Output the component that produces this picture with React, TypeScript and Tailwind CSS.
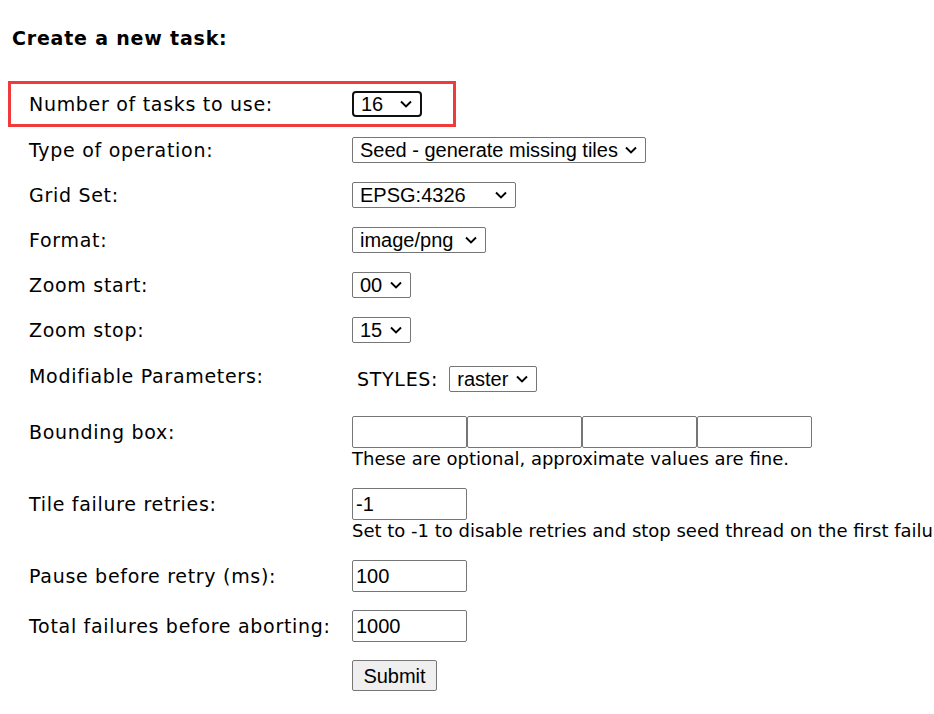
import React from "react";

function Chevron() {
  return (
    <svg width="12" height="8" viewBox="0 0 12 8" className="shrink-0">
      <path d="M1 1.5l5 5 5-5" fill="none" stroke="#000" strokeWidth="1.9" />
    </svg>
  );
}

function Select({ value, width, strong = false }: { value: string; width: string; strong?: boolean }) {
  return (
    <div
      className={`${width} h-[26px] flex items-center justify-between pl-[7px] pr-[8px] bg-white font-['Liberation_Sans',Arial,sans-serif] text-[20px] tracking-normal leading-none ${
        strong ? "border-2 border-[#101010] rounded-[4px]" : "border border-[#767676] rounded-[2px]"
      }`}
    >
      <span>{value}</span>
      <Chevron />
    </div>
  );
}

function TextBox({ value = "" }: { value?: string }) {
  return (
    <input
      readOnly
      value={value}
      className="w-[115px] h-[32px] border border-[#767676] rounded-[2px] px-[3px] font-['Liberation_Sans',Arial,sans-serif] text-[20px] tracking-normal text-black bg-white outline-none"
    />
  );
}

function Row({
  label,
  children,
  className = "",
  labelH = "h-[26px]",
}: {
  label: string;
  children: React.ReactNode;
  className?: string;
  labelH?: string;
}) {
  return (
    <div className={`flex items-start ${className}`}>
      <div className={`w-[323px] shrink-0 flex items-center ${labelH}`}>{label}</div>
      <div className="flex flex-col items-start">{children}</div>
    </div>
  );
}

export default function App() {
  return (
    <div className="w-[934px] h-[714px] overflow-hidden bg-white text-black font-['DejaVu_Sans',Verdana,sans-serif] text-[19px] tracking-[0.7px] leading-[22px]">
      <h3 className="pl-[12px] pt-[27px] font-bold text-[19px] tracking-[0.8px]">Create a new task:</h3>

      <div className="mt-[32px] ml-[8px] w-[448px] h-[46px] border-[3px] border-[#ef3b3b] flex items-center pl-[18px]">
        <div className="w-[323px] shrink-0">Number of tasks to use:</div>
        <Select value="16" width="w-[70px]" strong />
      </div>

      <div className="pl-[29px] flex flex-col">
        <Row label="Type of operation:" className="mt-[10px]">
          <Select value="Seed - generate missing tiles" width="w-[294px]" />
        </Row>
        <Row label="Grid Set:" className="mt-[19px]">
          <Select value="EPSG:4326" width="w-[164px]" />
        </Row>
        <Row label="Format:" className="mt-[19px]">
          <Select value="image/png" width="w-[134px]" />
        </Row>
        <Row label="Zoom start:" className="mt-[19px]">
          <Select value="00" width="w-[59px]" />
        </Row>
        <Row label="Zoom stop:" className="mt-[19px]">
          <Select value="15" width="w-[59px]" />
        </Row>
        <Row label="Modifiable Parameters:" className="mt-[20px]">
          <div className="flex items-center pl-[5px] mt-[3px]">
            <span className="mr-[11px]">STYLES:</span>
            <Select value="raster" width="w-[88px]" />
          </div>
        </Row>
        <Row label="Bounding box:" className="mt-[24px]" labelH="h-[32px]">
          <div className="flex">
            <TextBox />
            <TextBox />
            <TextBox />
            <TextBox />
          </div>
          <div className="text-[18px] tracking-normal leading-[22px] whitespace-nowrap">
            These are optional, approximate values are fine.
          </div>
        </Row>
        <Row label="Tile failure retries:" className="mt-[18px]" labelH="h-[32px]">
          <TextBox value="-1" />
          <div className="text-[18px] tracking-normal leading-[22px] whitespace-nowrap">
            Set to -1 to disable retries and stop seed thread on the first failure
          </div>
        </Row>
        <Row label="Pause before retry (ms):" className="mt-[18px]" labelH="h-[32px]">
          <TextBox value="100" />
        </Row>
        <Row label="Total failures before aborting:" className="mt-[18px]" labelH="h-[32px]">
          <TextBox value="1000" />
        </Row>
        <Row label="" className="mt-[18px]" labelH="h-[31px]">
          <button className="w-[85px] h-[31px] bg-[#efefef] border border-[#767676] rounded-[2px] font-['Liberation_Sans',Arial,sans-serif] text-[20px] tracking-normal text-black">
            Submit
          </button>
        </Row>
      </div>
    </div>
  );
}
